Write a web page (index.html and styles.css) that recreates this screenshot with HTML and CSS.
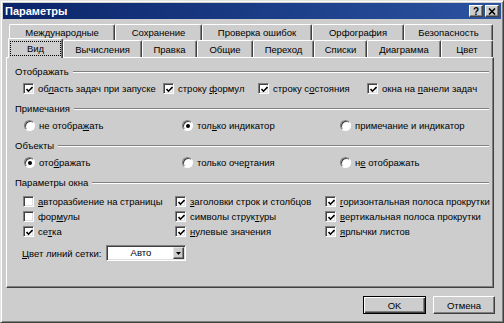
FILE: index.html
```html
<!DOCTYPE html>
<html lang="ru">
<head>
  <meta charset="UTF-8">
  <title>Параметры</title>
  <link rel="stylesheet" href="styles.css">
</head>
<body>

<div class="window">

  <!-- заголовок окна -->
  <div class="titlebar">
    <span class="title">Параметры</span>
    <div class="caption-btns">
      <button class="caption-btn">?</button>
      <button class="caption-btn">
        <svg width="8" height="7" viewBox="0 0 8 7"><path d="M1 0.5 L7 6.5 M7 0.5 L1 6.5" stroke="#000" stroke-width="1.6" fill="none"/></svg>
      </button>
    </div>
  </div>

  <!-- вкладки -->
  <div class="tabrow tabrow-back">
    <div class="tab">Международные</div>
    <div class="tab">Сохранение</div>
    <div class="tab">Проверка ошибок</div>
    <div class="tab">Орфография</div>
    <div class="tab">Безопасность</div>
  </div>
  <div class="tabrow tabrow-front">
    <div class="tab tab-active"><span class="focus">Вид</span></div>
    <div class="tab">Вычисления</div>
    <div class="tab">Правка</div>
    <div class="tab">Общие</div>
    <div class="tab">Переход</div>
    <div class="tab">Списки</div>
    <div class="tab">Диаграмма</div>
    <div class="tab">Цвет</div>
  </div>

  <div class="panel">

    <div class="group">
      <div class="group-title">Отображать</div>
      <div class="opts opts-display">
        <label class="check"><span class="box checked"><svg width="7" height="7" viewBox="0 0 7 7"><path d="M0.5 3 L2.5 5.2 L6.5 1" stroke="#000" stroke-width="1.6" fill="none"/></svg></span><span>об<u>л</u>асть задач при запуске</span></label>
        <label class="check"><span class="box checked"><svg width="7" height="7" viewBox="0 0 7 7"><path d="M0.5 3 L2.5 5.2 L6.5 1" stroke="#000" stroke-width="1.6" fill="none"/></svg></span><span>строку <u>ф</u>ормул</span></label>
        <label class="check"><span class="box checked"><svg width="7" height="7" viewBox="0 0 7 7"><path d="M0.5 3 L2.5 5.2 L6.5 1" stroke="#000" stroke-width="1.6" fill="none"/></svg></span><span>строку с<u>о</u>стояния</span></label>
        <label class="check"><span class="box checked"><svg width="7" height="7" viewBox="0 0 7 7"><path d="M0.5 3 L2.5 5.2 L6.5 1" stroke="#000" stroke-width="1.6" fill="none"/></svg></span><span>окна на <u>п</u>анели задач</span></label>
      </div>
    </div>

    <div class="group">
      <div class="group-title">Примечания</div>
      <div class="opts opts-radio">
        <label class="radio"><span class="dot"></span><span>не отобра<u>ж</u>ать</span></label>
        <label class="radio"><span class="dot on"></span><span>тол<u>ь</u>ко индикатор</span></label>
        <label class="radio"><span class="dot"></span><span>примечание и индикатор</span></label>
      </div>
    </div>

    <div class="group">
      <div class="group-title">Объекты</div>
      <div class="opts opts-radio">
        <label class="radio"><span class="dot on"></span><span>ото<u>б</u>ражать</span></label>
        <label class="radio"><span class="dot"></span><span>только оче<u>р</u>тания</span></label>
        <label class="radio"><span class="dot"></span><span>н<u>е</u> отображать</span></label>
      </div>
    </div>

    <div class="group">
      <div class="group-title">Параметры окна</div>
      <div class="opts opts-window">
        <label class="check"><span class="box"></span><span><u>а</u>вторазбиение на страницы</span></label>
        <label class="check"><span class="box checked"><svg width="7" height="7" viewBox="0 0 7 7"><path d="M0.5 3 L2.5 5.2 L6.5 1" stroke="#000" stroke-width="1.6" fill="none"/></svg></span><span><u>з</u>аголовки строк и столбцов</span></label>
        <label class="check"><span class="box checked"><svg width="7" height="7" viewBox="0 0 7 7"><path d="M0.5 3 L2.5 5.2 L6.5 1" stroke="#000" stroke-width="1.6" fill="none"/></svg></span><span><u>г</u>оризонтальная полоса прокрутки</span></label>

        <label class="check"><span class="box"></span><span>фор<u>м</u>улы</span></label>
        <label class="check"><span class="box checked"><svg width="7" height="7" viewBox="0 0 7 7"><path d="M0.5 3 L2.5 5.2 L6.5 1" stroke="#000" stroke-width="1.6" fill="none"/></svg></span><span>символы струк<u>т</u>уры</span></label>
        <label class="check"><span class="box checked"><svg width="7" height="7" viewBox="0 0 7 7"><path d="M0.5 3 L2.5 5.2 L6.5 1" stroke="#000" stroke-width="1.6" fill="none"/></svg></span><span><u>в</u>ертикальная полоса прокрутки</span></label>

        <label class="check"><span class="box checked"><svg width="7" height="7" viewBox="0 0 7 7"><path d="M0.5 3 L2.5 5.2 L6.5 1" stroke="#000" stroke-width="1.6" fill="none"/></svg></span><span>се<u>т</u>ка</span></label>
        <label class="check"><span class="box checked"><svg width="7" height="7" viewBox="0 0 7 7"><path d="M0.5 3 L2.5 5.2 L6.5 1" stroke="#000" stroke-width="1.6" fill="none"/></svg></span><span><u>н</u>улевые значения</span></label>
        <label class="check"><span class="box checked"><svg width="7" height="7" viewBox="0 0 7 7"><path d="M0.5 3 L2.5 5.2 L6.5 1" stroke="#000" stroke-width="1.6" fill="none"/></svg></span><span><u>я</u>рлычки листов</span></label>
      </div>

      <div class="combo-row">
        <span class="combo-label"><u>Ц</u>вет линий сетки:</span>
        <div class="combo">
          <span class="combo-value">Авто</span>
          <span class="combo-btn">
            <svg width="5" height="3" viewBox="0 0 5 3"><path d="M0 0 H5 L2.5 3 Z" fill="#000"/></svg>
          </span>
        </div>
      </div>
    </div>

  </div>

  <div class="actions">
    <button class="btn btn-default">OK</button>
    <button class="btn">Отмена</button>
  </div>

</div>

</body>
</html>
```

FILE: styles.css
```css
:root {
  --face: #cdcdcd;
  --light: #ffffff;
  --shadow: #808080;
  --dark: #404040;
}

* {
  box-sizing: border-box;
}

body {
  margin: 0;
  background: var(--face);
  font-family: "Liberation Sans", Arial, sans-serif;
  font-size: 9.5px;
  color: #000;
}

u {
  text-underline-offset: 1px;
}

/* --- окно --- */
.window {
  width: 504px;
  height: 323px;
  background: var(--face);
  border: 1px solid;
  border-color: #e4e4e4 var(--dark) var(--dark) #e4e4e4;
  box-shadow: inset 1px 1px var(--light), inset -1px -1px var(--shadow);
  padding: 2px;
  display: flex;
  flex-direction: column;
}

.titlebar {
  height: 16px;
  display: flex;
  align-items: center;
  justify-content: space-between;
  padding: 0 2px 0 2px;
  background: linear-gradient(90deg, #0a246a, #2b53a0);
}
.title {
  color: #fff;
  font-weight: bold;
  font-size: 11px;
}
.caption-btns {
  display: flex;
  gap: 2px;
}
.caption-btn {
  width: 14px;
  height: 12px;
  padding: 0;
  background: var(--face);
  border: 1px solid;
  border-color: var(--light) var(--dark) var(--dark) var(--light);
  box-shadow: inset -1px -1px var(--shadow);
  display: flex;
  align-items: center;
  justify-content: center;
  font: bold 10px "Liberation Sans", Arial, sans-serif;
  color: #000;
}

/* --- вкладки --- */
.tabrow {
  display: flex;
}
.tabrow-back {
  margin: 5px 0 0 6px;
  height: 16px;
}
.tabrow-front {
  margin-left: 5px;
  height: 17px;
  position: relative;
  z-index: 1;
}
.tab {
  height: 100%;
  display: flex;
  align-items: center;
  justify-content: center;
  background: var(--face);
  border: 1px solid;
  border-bottom: none;
  border-color: var(--light) var(--dark) var(--dark) var(--light);
  box-shadow: inset -1px 0 var(--shadow);
  border-radius: 2px 2px 0 0;
  white-space: nowrap;
}
.tabrow-back .tab:nth-child(1) { width: 106px; }
.tabrow-back .tab:nth-child(2) { width: 87px; }
.tabrow-back .tab:nth-child(3) { width: 110px; }
.tabrow-back .tab:nth-child(4) { width: 92px; }
.tabrow-back .tab:nth-child(5) { width: 89px; }

.tabrow-front .tab:nth-child(1) { width: 55px; }
.tabrow-front .tab:nth-child(2) { width: 79px; }
.tabrow-front .tab:nth-child(3) { width: 55px; }
.tabrow-front .tab:nth-child(4) { width: 56px; }
.tabrow-front .tab:nth-child(5) { width: 61px; }
.tabrow-front .tab:nth-child(6) { width: 53px; }
.tabrow-front .tab:nth-child(7) { width: 74px; }
.tabrow-front .tab:nth-child(8) { width: 52px; }

.tab-active {
  margin-top: -2px;
  height: 20px;
}
.focus {
  outline: 1px dotted #000;
  padding: 1px 16px;
  line-height: 11px;
}

/* --- панель --- */
.panel {
  margin-left: 3px;
  width: 488px;
  height: 231px;
  border: 1px solid;
  border-color: var(--light) var(--dark) var(--dark) var(--light);
  box-shadow: inset -1px -1px var(--shadow);
  padding: 6px 4px 0 8px;
}

.group + .group {
  margin-top: 5px;
}
.group-title {
  display: flex;
  align-items: center;
  gap: 4px;
  line-height: 15px;
}
.group-title::after {
  content: "";
  flex: 1;
  height: 0;
  border-top: 1px solid var(--shadow);
  border-bottom: 1px solid var(--light);
}

.opts {
  display: grid;
  grid-auto-rows: 15px;
  margin-top: 2px;
  padding-left: 8px;
}
.opts-display {
  grid-template-columns: 140px 95px 109px auto;
}
.opts-radio {
  grid-template-columns: 158px 158px auto;
  padding-left: 9px;
}
.opts-window {
  grid-template-columns: 152px 150px auto;
  margin-top: 4px;
}

.check,
.radio {
  display: flex;
  align-items: center;
  gap: 4px;
  white-space: nowrap;
}
.box {
  width: 11px;
  height: 11px;
  flex: none;
  background: #fff;
  border: 1px solid;
  border-color: var(--shadow) var(--light) var(--light) var(--shadow);
  box-shadow: inset 1px 1px var(--dark), inset -1px -1px #dfdfdf;
  display: flex;
  align-items: center;
  justify-content: center;
}
.box svg {
  margin: 1px 0 0 1px;
}
.dot {
  width: 11px;
  height: 11px;
  flex: none;
  border-radius: 50%;
  background: #fff;
  border: 1px solid;
  border-color: var(--shadow) var(--light) var(--light) var(--shadow);
  box-shadow: inset 1px 1px var(--dark);
  display: flex;
  align-items: center;
  justify-content: center;
}
.dot.on::after {
  content: "";
  width: 4px;
  height: 4px;
  border-radius: 50%;
  background: #000;
}

.combo-row {
  display: flex;
  align-items: center;
  gap: 5px;
  margin: 6px 0 0 7px;
}
.combo {
  width: 80px;
  height: 16px;
  display: flex;
  background: #fff;
  border: 1px solid;
  border-color: var(--shadow) var(--light) var(--light) var(--shadow);
  box-shadow: inset 1px 1px var(--dark), inset -1px -1px #dfdfdf;
  padding: 1px;
}
.combo-value {
  flex: 1;
  text-align: center;
  line-height: 12px;
}
.combo-btn {
  width: 11px;
  background: var(--face);
  border: 1px solid;
  border-color: #e4e4e4 var(--dark) var(--dark) #e4e4e4;
  box-shadow: inset -1px -1px var(--shadow);
  display: flex;
  align-items: center;
  justify-content: center;
}

/* --- кнопки --- */
.actions {
  display: flex;
  justify-content: flex-end;
  gap: 7px;
  margin-top: 8px;
  padding-right: 6px;
}
.btn {
  width: 62px;
  height: 18px;
  padding: 0;
  background: var(--face);
  border: 1px solid;
  border-color: var(--light) var(--dark) var(--dark) var(--light);
  box-shadow: inset -1px -1px var(--shadow);
  font: 9.5px "Liberation Sans", Arial, sans-serif;
  color: #000;
}
.btn-default {
  width: 63px;
  border-color: #000;
  box-shadow: inset 1px 1px var(--light), inset -1px -1px var(--dark), inset -2px -2px var(--shadow);
}
```
